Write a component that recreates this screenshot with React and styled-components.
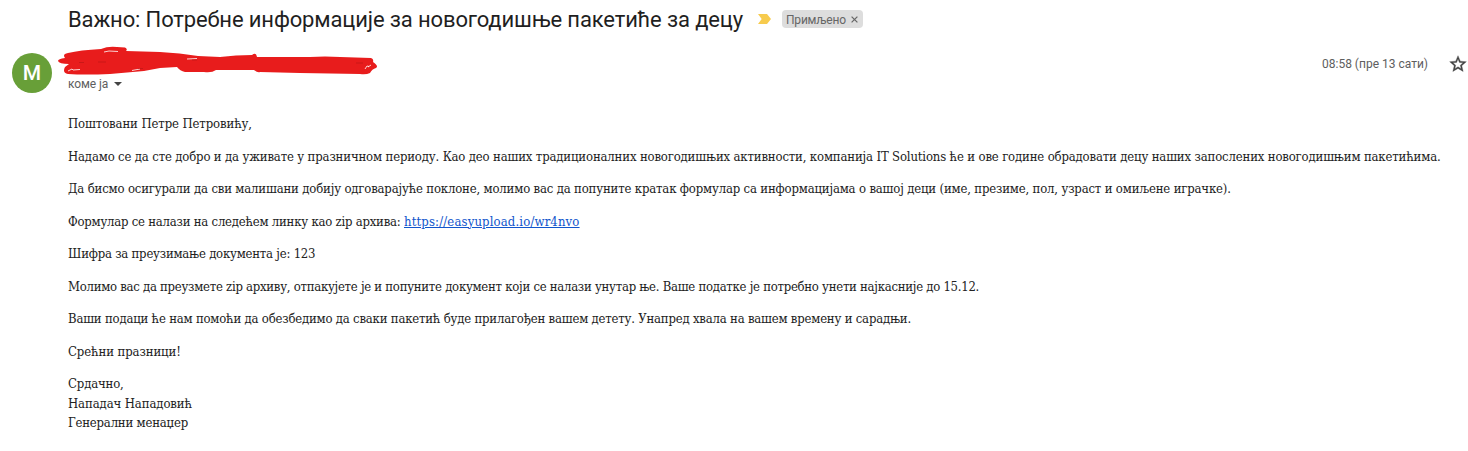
import React from "react";
import styled, { createGlobalStyle } from "styled-components";

const GlobalStyle = createGlobalStyle`
  * { box-sizing: border-box; }
  body { margin: 0; background: #fff; color: #222; overflow: hidden; }
`;

const Message = styled.article`
  width: 1468px;
  height: 451px;
  background: #fff;
`;

const SubjectBar = styled.header`
  display: flex;
  align-items: center;
  height: 40px;
  padding-left: 68px;
`;

const Subject = styled.h1`
  margin: 0;
  width: 675px;
  font: 400 22px/28px Roboto, sans-serif;
  letter-spacing: -0.136px;
  color: #1f1f1f;
  white-space: nowrap;
`;

const Importance = styled.svg`
  display: block;
  margin: 0 0 2px 15px;
  flex: none;
`;

const Label = styled.div`
  display: flex;
  align-items: center;
  width: 81px;
  height: 18px;
  margin: 0 0 2px 11px;
  padding: 1px 5px 0 4px;
  border-radius: 4px;
  background: #ddd;
  color: #666;
  font: 400 12px/16px Roboto, sans-serif;
  letter-spacing: -0.2px;
  white-space: nowrap;
`;

const LabelClose = styled.svg`
  display: block;
  margin-left: auto;
  flex: none;
`;

const SenderBar = styled.section`
  display: flex;
  height: 74px;
  padding: 6px 0 0 12px;
`;

const Avatar = styled.div`
  display: flex;
  align-items: center;
  justify-content: center;
  flex: none;
  width: 40px;
  height: 40px;
  margin-top: 7px;
  padding-top: 1px;
  border-radius: 50%;
  background: #689f38;
  color: #fff;
  font: 500 21px/39px Roboto, sans-serif;
`;

const Sender = styled.div`
  flex: 1;
  margin-left: 6px;
`;

const Redaction = styled.svg`
  display: block;
`;

const Recipient = styled.div`
  display: flex;
  align-items: center;
  height: 16px;
  padding-left: 10px;
  color: #5e5e5e;
  font: 400 12px/16px Roboto, sans-serif;
  letter-spacing: -0.1px;
`;

const Caret = styled.span`
  width: 0;
  height: 0;
  margin: 0 0 1px 6px;
  border: 4px solid transparent;
  border-top-color: #444;
  border-bottom-width: 0;
`;

const Time = styled.time`
  width: 106px;
  margin-top: 10px;
  color: #5e5e5e;
  font: 400 12px/16px Roboto, sans-serif;
  white-space: nowrap;
`;

const Star = styled.svg`
  display: block;
  flex: none;
  margin: 8px 0 0 20px;
`;

const Body = styled.main`
  padding-left: 68px;
  color: #222;
  font: 400 13px/19.5px "DejaVu Serif Condensed", "DejaVu Serif", serif;
  font-stretch: condensed;
`;

const Paragraph = styled.p`
  margin: 0 0 13px;
`;

const Line = styled.span`
  display: block;
  white-space: pre;
  letter-spacing: ${(p) => p.$spacing || 0}px;
`;

const Link = styled.a`
  color: #15c;
  text-decoration: underline;
  letter-spacing: 0.14px;
`;

export default function App() {
  return (
    <Message>
      <GlobalStyle />
      <SubjectBar>
        <Subject>Важно: Потребне информације за новогодишње пакетиће за децу</Subject>
        <Importance width="13" height="10" viewBox="0 0 13 10">
          <path d="M0 0H9L13 5L9 10H0L3.7 5Z" fill="#f7cb4d" />
        </Importance>
        <Label>
          Примљено
          <LabelClose width="7" height="7" viewBox="0 0 7 7">
            <path d="M.6.6L6.4 6.4M6.4.6L.6 6.4" stroke="#666" strokeWidth="1.2" />
          </LabelClose>
        </Label>
      </SubjectBar>
      <SenderBar>
        <Avatar>M</Avatar>
        <Sender>
          <Redaction width="322" height="30" viewBox="58 46 322 30">
            <path
              d="M58 61Q58 59 65 58Q62 54 68 53Q80 50 101 49Q108 46 117 47L125 47.500Q128 49 126 51L160 52Q180 53 198 56L220 57Q236 55 252 55Q256 51.500 257 57L310 57L325 56.500L371 58Q374 59 373 62Q379 66 376 68Q372 69 370 73Q366 75 360 74L300 73L260 72Q258 73 254 70L216 70Q212 73 204 72L185 72Q180 71 177 67L160 68L144 71L110 74Q85 75 68 74Q62 73 65 67L69 64Q59 64 58 61Z"
              fill="#e81c1c"
            />
            <path d="M68 71L72 69L73 70L80 69.500M104 52L109 51L118 51.500M132 70.500L140 69M187 59L197 58.500M365 69L367 66L369 66.500M368 67L371 65" fill="none" stroke="#fff" strokeWidth="0.8" />
            <path d="M79 62.500H84M98 62H106M138 68.500H143M192 60H197M356 63H363" fill="none" stroke="#b61414" strokeWidth="0.6" />
          </Redaction>
          <Recipient>
            коме ја
            <Caret />
          </Recipient>
        </Sender>
        <Time>08:58 (пре 13 сати)</Time>
        <Star width="20" height="20" viewBox="0 0 24 24">
          <path
            d="M22 9.240l-7.190-.620L12 2 9.190 8.630 2 9.240l5.460 4.730L5.820 21 12 17.270 18.180 21l-1.630-7.030L22 9.240zM12 15.400l-3.760 2.270 1-4.280-3.320-2.880 4.380-.380L12 6.100l1.710 4.040 4.380.380-3.320 2.880 1 4.280L12 15.400z"
            fill="#444"
            stroke="#444"
            strokeWidth="0.4"
          />
        </Star>
      </SenderBar>
      <Body>
        <Paragraph>
          <Line $spacing={-0.11}>Поштовани Петре Петровићу,</Line>
        </Paragraph>
        <Paragraph>
          <Line $spacing={-0.155}>Надамо се да сте добро и да уживате у празничном периоду. Као део наших традиционалних новогодишњих активности, компанија IT Solutions ће и ове године обрадовати децу наших запослених новогодишњим пакетићима.</Line>
        </Paragraph>
        <Paragraph>
          <Line $spacing={-0.168}>Да бисмо осигурали да сви малишани добију одговарајуће поклоне, молимо вас да попуните кратак формулар са информацијама о вашој деци (име, презиме, пол, узраст и омиљене играчке).</Line>
        </Paragraph>
        <Paragraph>
          <Line $spacing={-0.225}>
            Формулар се налази на следећем линку као zip архива: <Link href="https://easyupload.io/wr4nvo">https://easyupload.io/wr4nvo</Link>
          </Line>
        </Paragraph>
        <Paragraph>
          <Line $spacing={-0.22}>Шифра за преузимање документа је: 123</Line>
        </Paragraph>
        <Paragraph>
          <Line $spacing={-0.264}>Молимо вас да преузмете zip архиву, отпакујете је и попуните документ који се налази унутар ње. Ваше податке је потребно унети најкасније до 15.12.</Line>
        </Paragraph>
        <Paragraph>
          <Line $spacing={-0.2}>Ваши подаци ће нам помоћи да обезбедимо да сваки пакетић буде прилагођен вашем детету. Унапред хвала на вашем времену и сарадњи.</Line>
        </Paragraph>
        <Paragraph>
          <Line $spacing={-0.1}>Срећни празници!</Line>
        </Paragraph>
        <Paragraph>
          <Line $spacing={-0.15}>Срдачно,</Line>
          <Line $spacing={-0.1}>Нападач Нападовић</Line>
          <Line $spacing={-0.2}>Генерални менаџер</Line>
        </Paragraph>
      </Body>
    </Message>
  );
}
